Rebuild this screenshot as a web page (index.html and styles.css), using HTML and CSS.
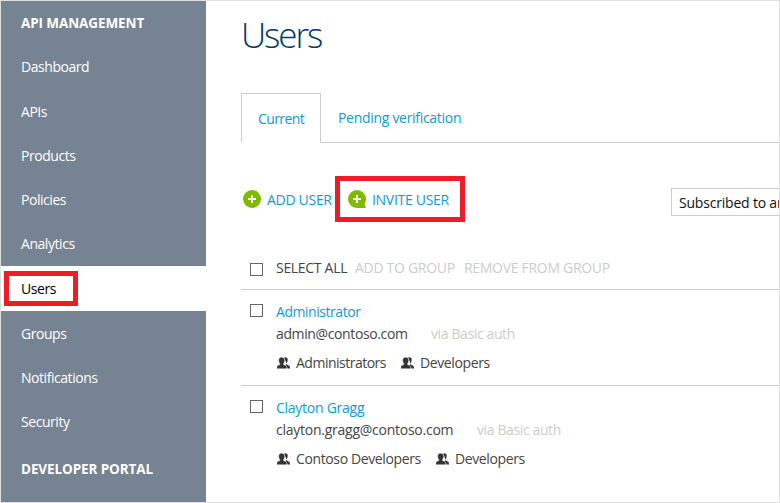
FILE: index.html
```html
<!DOCTYPE html>
<html lang="en">
<head>
<meta charset="utf-8">
<title>Users</title>
<link rel="stylesheet" href="styles.css">
</head>
<body>
<svg width="0" height="0" class="defs" aria-hidden="true">
  <symbol id="people" viewBox="0 0 13 12">
    <path d="M7.200.5C9.500-.2 10.900 1 10.700 3c0 1.300-.4 2.300-1 3v1.400c1.500.8 2.800 1.300 3.100 2.200l.2 1.900h-2.300L8.600 8.300l1-1.600z"/>
    <path stroke="#fff" stroke-width=".4" d="M4.600.2C6.700.2 7.800 1.500 7.700 3.400c0 1.300-.5 2.300-1.100 2.900v1.300c1.600.7 2.800 1.200 3.100 2.100l.3 2H-.4l.2-2c.4-.9 1.500-1.400 3-2.100V6.300C2.100 5.700 1.700 4.700 1.700 3.400 1.600 1.500 2.600.2 4.600.2z"/>
  </symbol>
</svg>
<div class="frame">
  <nav class="sidebar">
    <div class="heading">API MANAGEMENT</div>
    <a class="item">Dashboard</a>
    <a class="item">APIs</a>
    <a class="item">Products</a>
    <a class="item">Policies</a>
    <a class="item">Analytics</a>
    <a class="item active">Users<i class="mark mark-users"></i></a>
    <a class="item">Groups</a>
    <a class="item">Notifications</a>
    <a class="item">Security</a>
    <div class="heading portal">DEVELOPER PORTAL</div>
  </nav>
  <main class="content">
    <h1>Users</h1>
    <div class="tabs">
      <a class="tab current">Current</a>
      <a class="tab pending">Pending verification</a>
    </div>
    <div class="toolbar">
      <a class="action add"><svg class="plus" viewBox="0 0 18 18"><circle cx="9" cy="9" r="9"/><path d="M9 5v8M5 9h8"/></svg><span>ADD USER</span></a>
      <a class="action invite"><svg class="plus" viewBox="0 0 18 18"><circle cx="9" cy="9" r="9"/><path class="tail" d="M18 9l-1.500 5 1.500 4H9z"/><path d="M9 5v8M5 9h8"/></svg><span>INVITE USER</span><i class="mark mark-invite"></i></a>
      <div class="select">Subscribed to any</div>
    </div>
    <div class="bulk">
      <i class="check"></i>
      <span class="all">SELECT ALL</span><span class="off addg">ADD TO GROUP</span><span class="off remg">REMOVE FROM GROUP</span>
    </div>
    <section class="user">
      <i class="check"></i>
      <div class="info">
        <a class="name">Administrator</a>
        <div class="mail"><span class="m1">admin@contoso.com</span><span class="via">via Basic auth</span></div>
        <div class="groups"><span class="group g1"><svg class="people"><use href="#people"/></svg>Administrators</span><span class="group"><svg class="people"><use href="#people"/></svg>Developers</span></div>
      </div>
    </section>
    <section class="user">
      <i class="check"></i>
      <div class="info">
        <a class="name n2">Clayton Gragg</a>
        <div class="mail"><span class="m2">clayton.gragg@contoso.com</span><span class="via">via Basic auth</span></div>
        <div class="groups"><span class="group g2"><svg class="people"><use href="#people"/></svg>Contoso Developers</span><span class="group"><svg class="people"><use href="#people"/></svg>Developers</span></div>
      </div>
    </section>
  </main>
</div>
</body>
</html>
```
FILE: styles.css
```css
* { box-sizing: border-box; }
body { margin: 0; background: #fff; color: #444; font: 14px/20px "Open Sans", "Noto Sans", sans-serif; letter-spacing: -0.38px; }
.defs { display: block; height: 0; }
.frame { display: flex; width: 780px; height: 503px; border: 1px solid #e0e0e0; overflow: hidden; }
.sidebar { flex: none; width: 205px; background: #768392; color: #fff; }
.heading { height: 43.100px; padding: 12px 0 0 20px; font-weight: 700; font-size: 13.500px; letter-spacing: -0.1px; }
.portal { padding-top: 15.600px; }
.item { position: relative; display: block; height: 44.300px; padding: 13.200px 0 0 20px; letter-spacing: -0.45px; }
.active { height: 45px; background: #fff; color: #000; }
.mark { position: absolute; border: 5px solid #ee1c24; }
.mark-users { left: 3px; top: 5.400px; width: 74px; height: 35px; }
.content { flex: 1; min-width: 0; padding-left: 35px; }
h1 { margin: 0; height: 92px; padding-top: 10px; font-weight: 300; font-size: 35px; line-height: 48px; color: #00386b; letter-spacing: -2.100px; }
.tabs { display: flex; height: 50px; color: #0f9bcf; }
.tab { height: 50px; border-bottom: 1px solid #ccc; }
.current { flex: none; width: 80px; padding: 15px 0 0 16px; border: 1px solid #ccc; border-bottom-color: #fff; letter-spacing: -0.6px; }
.pending { flex: 1; padding: 15px 0 0 17px; letter-spacing: -0.3px; }
.toolbar { display: flex; align-items: center; height: 113px; margin-bottom: 2px; color: #0f9bcf; letter-spacing: -0.3px; }
.action { flex: none; position: relative; display: flex; align-items: center; gap: 6px; }
.add { width: 105px; padding-left: 2px; }
.invite { width: 118px; padding-left: 2px; }
.action span { white-space: nowrap; }
.plus { flex: none; width: 18px; height: 18px; margin-top: -1px; fill: #7fba00; }
.plus path { fill: none; stroke: #fff; stroke-width: 2; }
.plus .tail { fill: #7fba00; stroke: none; }
.mark-invite { left: -11px; top: -14px; width: 130px; height: 46px; }
.select { flex: none; width: 140px; height: 28px; margin-left: 207px; margin-top: 5px; padding: 4px 0 0 7px; border: 1px solid #ccc; color: #111; white-space: nowrap; letter-spacing: -0.2px; }
.bulk { display: flex; height: 32px; border-bottom: 1px solid #ccc; letter-spacing: -0.3px; }
.check { flex: none; width: 13px; height: 13px; margin: 5px 13px 0 9px; border: 1px solid #666; }
.bulk span { flex: none; white-space: nowrap; }
.all { width: 79px; }
.off { color: #ccc; }
.addg { width: 109px; }
.user { display: flex; height: 96px; border-bottom: 1px solid #ccc; }
.user + .user { border: 0; }
.user .check { margin-top: 14px; }
.info { padding-top: 12px; white-space: nowrap; }
.name { display: block; height: 22px; color: #0f9bcf; letter-spacing: -0.45px; }
.n2 { letter-spacing: -0.26px; }
.mail { display: flex; gap: 24px; height: 29px; }
.m1 { width: 131px; }
.m2 { width: 177px; letter-spacing: -0.25px; }
.via { color: #ccc; }
.groups { display: flex; }
.group { display: flex; align-items: center; gap: 6px; }
.people { width: 13px; height: 12px; margin-left: 1px; fill: #333; }
.g1 { width: 124px; letter-spacing: -0.5px; }
.g2 { width: 159px; }
```
